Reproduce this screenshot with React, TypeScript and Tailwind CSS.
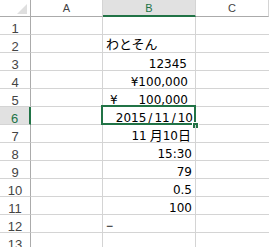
const GREEN = "#217346";

type Row = {
  n: number;
  cell?: React.ReactNode;
};

const num = "font-['DejaVu_Sans','Noto_Sans_CJK_JP',sans-serif] text-[12px] leading-[12px]";
const kanji = "font-['Noto_Sans_CJK_JP',sans-serif] text-[13px] leading-[12px]";

const rows: Row[] = [
  { n: 1 },
  {
    n: 2,
    cell: (
      <span className="pl-[3px] font-['Noto_Sans_CJK_JP',sans-serif] text-[13px] leading-[16px]">
        わとそん
      </span>
    ),
  },
  { n: 3, cell: <span className={`ml-auto pr-[8px] ${num}`}>12345</span> },
  { n: 4, cell: <span className={`ml-auto pr-[7px] ${num}`}>¥100,000</span> },
  {
    n: 5,
    cell: (
      <div className={`flex w-full justify-between pl-[7px] pr-[7px] ${num}`}>
        <span>¥</span>
        <span>100,000</span>
      </div>
    ),
  },
  {
    n: 6,
    cell: (
      <span className={`ml-auto pr-[2px] ${num}`}>
        2015<span className="px-[2px]">/</span>11<span className="px-[2px]">/</span>10
      </span>
    ),
  },
  {
    n: 7,
    cell: (
      <span className={`ml-auto pr-[4px] ${num}`}>
        11<span className={`ml-[3px] ${kanji}`}>月</span>10<span className={kanji}>日</span>
      </span>
    ),
  },
  { n: 8, cell: <span className={`ml-auto pr-[3px] ${num}`}>15:30</span> },
  { n: 9, cell: <span className={`ml-auto pr-[3px] ${num}`}>79</span> },
  { n: 10, cell: <span className={`ml-auto pr-[3px] ${num}`}>0.5</span> },
  { n: 11, cell: <span className={`ml-auto pr-[3px] ${num}`}>100</span> },
  {
    n: 12,
    cell: (
      <span className="pl-[3px] font-['Liberation_Sans',sans-serif] text-[12px] leading-[12px]">
        −
      </span>
    ),
  },
  { n: 13 },
];

function ColHeader({ label, active }: { label: string; active?: boolean }) {
  return (
    <div
      className={
        active
          ? "border-r border-r-[#d4d4d4] border-b-2 border-b-[#217346] bg-[#e1e1e1] text-center font-['Liberation_Sans',sans-serif] text-[11px] leading-[16px] text-[#217346]"
          : "border-r border-r-[#d4d4d4] border-b border-b-[#ababab] bg-white text-center font-['Liberation_Sans',sans-serif] text-[11px] leading-[16px] text-[#444]"
      }
    >
      {label}
    </div>
  );
}

export default function App() {
  return (
    <div className="h-[247px] w-[269px] overflow-hidden bg-white text-black">
      <div className="grid grid-cols-[31px_72px_93px_1fr] grid-rows-[17px_repeat(13,18px)]">
        <div className="relative border-r border-r-[#ababab] border-b border-b-[#ababab] bg-white">
          <svg className="absolute left-[17px] top-[4px]" width="10" height="10" viewBox="0 0 10 10">
            <polygon points="10,0 10,10 0,10" fill="#dfdfdf" />
          </svg>
        </div>
        <ColHeader label="A" />
        <ColHeader label="B" active />
        <ColHeader label="C" />

        {rows.map((r) => {
          const selected = r.n === 6;
          return [
            <div
              key={`h${r.n}`}
              className={
                selected
                  ? "flex items-end justify-center border-r-2 border-r-[#217346] border-b border-b-[#d4d4d4] bg-[#e1e1e1] font-['Liberation_Sans',sans-serif] text-[13px] leading-[11px] text-[#217346]"
                  : "flex items-end justify-center border-r border-r-[#ababab] border-b border-b-[#d4d4d4] bg-white font-['Liberation_Sans',sans-serif] text-[13px] leading-[11px] text-[#444]"
              }
            >
              <span>{r.n}</span>
            </div>,
            <div key={`a${r.n}`} className="border-r border-b border-[#d4d4d4]" />,
            <div
              key={`b${r.n}`}
              className="relative flex items-end border-r border-b border-[#d4d4d4]"
            >
              {r.cell}
              {selected && (
                <>
                  <div
                    className="pointer-events-none absolute -left-[2px] -top-[2px] -right-[1px] -bottom-[1px] border-2"
                    style={{ borderColor: GREEN }}
                  />
                  <div className="absolute left-[89px] top-[15px] h-[7px] w-[7px] border border-white bg-[#217346]" />
                </>
              )}
            </div>,
            <div key={`c${r.n}`} className="border-b border-[#d4d4d4]" />,
          ];
        })}
      </div>
    </div>
  );
}
